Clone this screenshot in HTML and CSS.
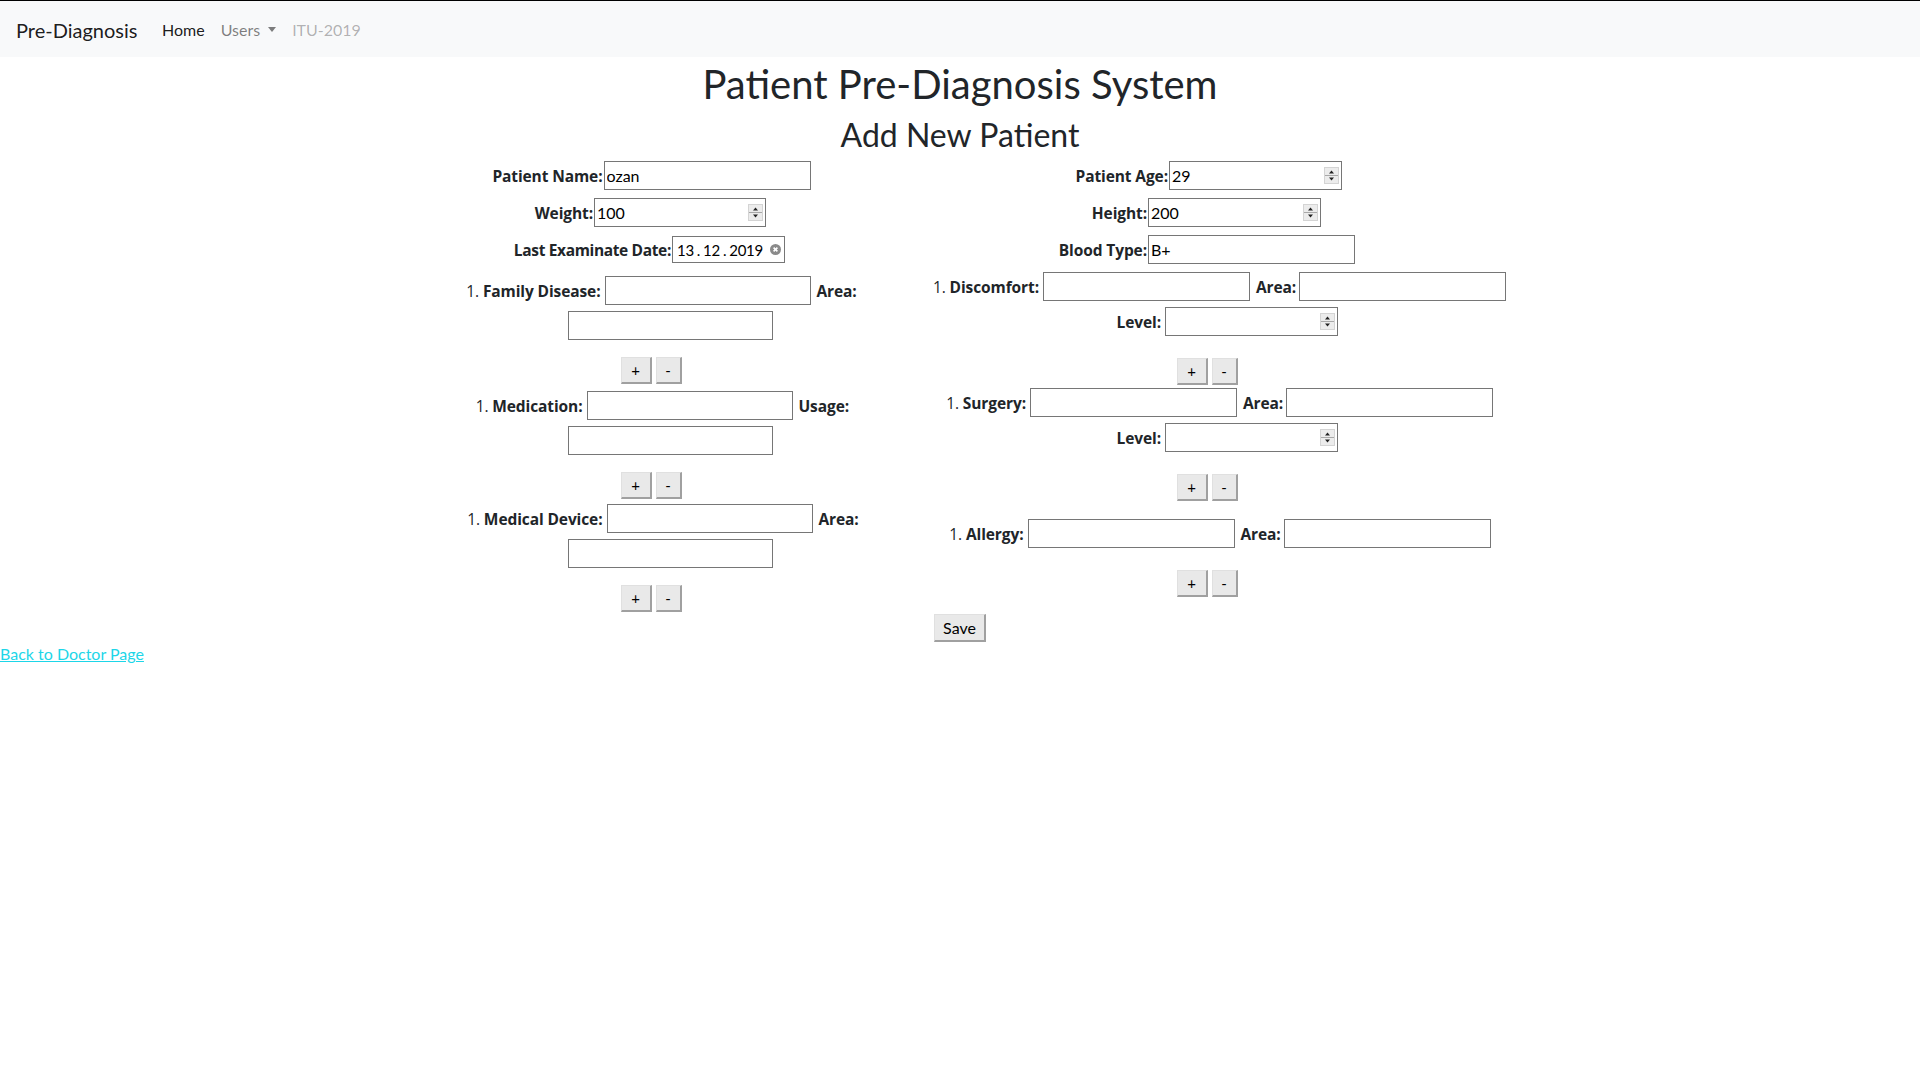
FILE: index.html
```html
<!DOCTYPE html>
<html lang="en">
<head>
<meta charset="utf-8">
<title>Pre-Diagnosis</title>
<link rel="stylesheet" href="styles.css">
</head>
<body>
<nav class="navbar">
  <a class="brand" href="#">Pre-Diagnosis</a>
  <ul class="nav">
    <li><a class="nav-link active" href="#">Home</a></li>
    <li><a class="nav-link" href="#">Users<span class="caret"></span></a></li>
    <li><a class="nav-link disabled" href="#">ITU-2019</a></li>
  </ul>
</nav>

<h1 class="title">Patient Pre-Diagnosis System</h1>
<h2 class="subtitle">Add New Patient</h2>

<form class="patient-form">
  <div class="cols">
    <div class="col">
      <div class="row r1">
        <label class="lbl l-name"><span>Patient Name:</span></label>
        <input class="txt w207" type="text" value="ozan">
      </div>
      <div class="row r2">
        <label class="lbl l-weight"><span>Weight:</span></label>
        <span class="spin-field w172">
          <input class="bare" type="text" value="100">
          <svg class="spinner" width="15" height="17" viewBox="0 0 15 17" aria-hidden="true"><rect x="0.5" y="0.5" width="14" height="16" fill="#ececec" stroke="#d4d4d4"/><line x1="1" y1="8.5" x2="14" y2="8.5" stroke="#a8a8a8"/><path d="M5 6.5h5L7.5 3.5z" fill="#222"/><path d="M5 10.5h5L7.5 13.5z" fill="#222"/></svg>
        </span>
      </div>
      <div class="row r3 short">
        <label class="lbl l-date"><span>Last Examinate Date:</span></label>
        <span class="date-field">
          <input class="bare date" type="text" value="13 . 12 . 2019">
          <svg class="clear" width="11" height="11" viewBox="0 0 11 11" aria-hidden="true"><circle cx="5.5" cy="5.5" r="5.5" fill="#8a8a8a"/><path d="M3.6 3.6l3.8 3.8M7.4 3.6l-3.8 3.8" stroke="#fff" stroke-width="1.6"/></svg>
        </span>
      </div>
      <div class="row r4">
        <label class="lbl l-family"><span><span class="num">1.</span> Family Disease:</span></label>
        <input class="txt w206" type="text">
        <span class="lbl after a44"><span>Area:</span></span>
      </div>
      <div class="row r5 offset">
        <input class="txt w205" type="text">
      </div>
      <div class="row btns r6">
        <button class="btn plus" type="button">+</button>
        <button class="btn minus" type="button">-</button>
      </div>
      <div class="row r7">
        <label class="lbl l-med"><span><span class="num">1.</span> Medication:</span></label>
        <input class="txt w206" type="text">
        <span class="lbl after a55"><span>Usage:</span></span>
      </div>
      <div class="row r8 offset">
        <input class="txt w205" type="text">
      </div>
      <div class="row btns r9">
        <button class="btn plus" type="button">+</button>
        <button class="btn minus" type="button">-</button>
      </div>
      <div class="row r10">
        <label class="lbl l-device"><span><span class="num">1.</span> Medical Device:</span></label>
        <input class="txt w206" type="text">
        <span class="lbl after a44"><span>Area:</span></span>
      </div>
      <div class="row r11 offset">
        <input class="txt w205" type="text">
      </div>
      <div class="row btns r12">
        <button class="btn plus" type="button">+</button>
        <button class="btn minus" type="button">-</button>
      </div>
    </div>

    <div class="col">
      <div class="row q1">
        <label class="lbl l-age"><span>Patient Age:</span></label>
        <span class="spin-field w173">
          <input class="bare" type="text" value="29">
          <svg class="spinner" width="15" height="17" viewBox="0 0 15 17" aria-hidden="true"><rect x="0.5" y="0.5" width="14" height="16" fill="#ececec" stroke="#d4d4d4"/><line x1="1" y1="8.5" x2="14" y2="8.5" stroke="#a8a8a8"/><path d="M5 6.5h5L7.5 3.5z" fill="#222"/><path d="M5 10.5h5L7.5 13.5z" fill="#222"/></svg>
        </span>
      </div>
      <div class="row q2">
        <label class="lbl l-height"><span>Height:</span></label>
        <span class="spin-field w173">
          <input class="bare" type="text" value="200">
          <svg class="spinner" width="15" height="17" viewBox="0 0 15 17" aria-hidden="true"><rect x="0.5" y="0.5" width="14" height="16" fill="#ececec" stroke="#d4d4d4"/><line x1="1" y1="8.5" x2="14" y2="8.5" stroke="#a8a8a8"/><path d="M5 6.5h5L7.5 3.5z" fill="#222"/><path d="M5 10.5h5L7.5 13.5z" fill="#222"/></svg>
        </span>
      </div>
      <div class="row q3">
        <label class="lbl l-blood"><span>Blood Type:</span></label>
        <input class="txt w207" type="text" value="B+">
      </div>
      <div class="row q4">
        <label class="lbl l-disc"><span><span class="num">1.</span> Discomfort:</span></label>
        <input class="txt w207" type="text">
        <span class="lbl after a49"><span>Area:</span></span>
        <input class="txt w207" type="text">
      </div>
      <div class="row q5">
        <label class="lbl l-level"><span>Level:</span></label>
        <span class="spin-field w173">
          <input class="bare" type="text">
          <svg class="spinner" width="15" height="17" viewBox="0 0 15 17" aria-hidden="true"><rect x="0.5" y="0.5" width="14" height="16" fill="#ececec" stroke="#d4d4d4"/><line x1="1" y1="8.5" x2="14" y2="8.5" stroke="#a8a8a8"/><path d="M5 6.5h5L7.5 3.5z" fill="#222"/><path d="M5 10.5h5L7.5 13.5z" fill="#222"/></svg>
        </span>
      </div>
      <div class="row btns q6">
        <button class="btn plus" type="button">+</button>
        <button class="btn minus" type="button">-</button>
      </div>
      <div class="row q7">
        <label class="lbl l-surg"><span><span class="num">1.</span> Surgery:</span></label>
        <input class="txt w207" type="text">
        <span class="lbl after a49"><span>Area:</span></span>
        <input class="txt w207" type="text">
      </div>
      <div class="row q8">
        <label class="lbl l-level"><span>Level:</span></label>
        <span class="spin-field w173">
          <input class="bare" type="text">
          <svg class="spinner" width="15" height="17" viewBox="0 0 15 17" aria-hidden="true"><rect x="0.5" y="0.5" width="14" height="16" fill="#ececec" stroke="#d4d4d4"/><line x1="1" y1="8.5" x2="14" y2="8.5" stroke="#a8a8a8"/><path d="M5 6.5h5L7.5 3.5z" fill="#222"/><path d="M5 10.5h5L7.5 13.5z" fill="#222"/></svg>
        </span>
      </div>
      <div class="row btns q9">
        <button class="btn plus" type="button">+</button>
        <button class="btn minus" type="button">-</button>
      </div>
      <div class="row q10">
        <label class="lbl l-allergy"><span><span class="num">1.</span> Allergy:</span></label>
        <input class="txt w207" type="text">
        <span class="lbl after a49"><span>Area:</span></span>
        <input class="txt w207" type="text">
      </div>
      <div class="row btns q11">
        <button class="btn plus" type="button">+</button>
        <button class="btn minus" type="button">-</button>
      </div>
    </div>
  </div>

  <div class="save-row">
    <button class="btn save" type="button">Save</button>
  </div>
</form>

<div class="back-row"><a class="back" href="#">Back to Doctor Page</a></div>
</body>
</html>
```
FILE: styles.css
```css
* { box-sizing: border-box; }

body {
  margin: 0;
  font-family: Lato, "Open Sans", sans-serif;
  font-size: 16px;
  line-height: 24px;
  color: #212529;
  background: #fff;
}

/* ---------- navbar ---------- */
.navbar {
  display: flex;
  align-items: center;
  height: 57px;
  padding: 1px 16px 0;
  border-top: 1px solid #000;
  background: #f8f9fa;
}
.brand {
  min-width: 122px;
  margin-right: 16px;
  font-size: 20px;
  line-height: 30px;
  color: rgba(0, 0, 0, .9);
  text-decoration: none;
}
.nav {
  display: flex;
  margin: 0;
  padding: 0;
  list-style: none;
}
.nav-link {
  display: block;
  padding: 8px;
  color: rgba(0, 0, 0, .5);
  text-decoration: none;
}
.nav-link.active { color: rgba(0, 0, 0, .9); }
.nav-link.disabled { color: rgba(0, 0, 0, .3); }
.caret {
  display: inline-block;
  margin-left: 8px;
  vertical-align: 4px;
  border-top: 5px solid;
  border-left: 4.5px solid transparent;
  border-right: 4.5px solid transparent;
}

/* ---------- headings ---------- */
.title {
  margin: 0 0 8px;
  padding-top: 3px;
  font-size: 40px;
  line-height: 48px;
  font-weight: 400;
  text-align: center;
}
.subtitle {
  margin: 0 0 5px;
  font-size: 32px;
  line-height: 38px;
  font-weight: 400;
  text-align: center;
}

/* ---------- form ---------- */
.patient-form { margin: 0; }
.cols {
  display: grid;
  grid-template-columns: 494px 618px;
  justify-content: center;
  align-items: start;
}
.col {
  display: flex;
  flex-direction: column;
}
.row {
  display: flex;
  justify-content: center;
  align-items: center;
  height: 29px;
}
.row.btns { height: 27px; gap: 4px; }
.row.short { height: 27px; }
.row.offset { padding-left: 38px; }

/* vertical rhythm, left column */
.r1 { margin-top: 2px; }
.r2 { margin-top: 8px; }
.r3 { margin-top: 9px; }
.r4 { margin-top: 13px; }
.r5 { margin-top: 6px; }
.r6 { margin-top: 17px; }
.r7 { margin-top: 7px; }
.r8 { margin-top: 6px; }
.r9 { margin-top: 17px; }
.r10 { margin-top: 5px; }
.r11 { margin-top: 6px; }
.r12 { margin-top: 17px; }

/* vertical rhythm, right column */
.q1 { margin-top: 2px; }
.q2 { margin-top: 8px; }
.q3 { margin-top: 8px; }
.q4 { margin-top: 8px; }
.q5 { margin-top: 6px; }
.q6 { margin-top: 22px; }
.q7 { margin-top: 3px; }
.q8 { margin-top: 6px; }
.q9 { margin-top: 22px; }
.q10 { margin-top: 18px; }
.q11 { margin-top: 22px; }

.lbl {
  flex: none;
  display: flex;
  justify-content: flex-end;
  font-family: "Open Sans", Lato, sans-serif;
  font-size: 15.5px;
  font-weight: 700;
  letter-spacing: -0.1px;
  white-space: pre;
  padding-right: 1px;
}
.lbl .num { font-weight: 400; }
.l-name { width: 112px; }
.l-weight { width: 58px; }
.l-date { width: 155px; letter-spacing: -0.35px; }
.l-family { width: 157px; padding-right: 4px; }
.l-med { width: 132px; padding-right: 4px; }
.l-device { width: 161px; padding-right: 4px; }
.l-age { width: 97px; }
.l-height { width: 55px; }
.l-blood { width: 89px; }
.l-disc { width: 135px; padding-right: 4px; }
.l-level { width: 89px; padding-right: 4px; }
.l-surg { width: 109px; padding-right: 4px; }
.l-allergy { width: 104px; padding-right: 4px; }

.lbl.after { justify-content: flex-start; padding: 0 0 0 6px; }
.a44 { width: 44px; }
.a55 { width: 55px; }
.a49 { width: 49px; padding-left: 5px; }

.txt {
  flex: none;
  height: 29px;
  margin: 0;
  padding: 0 2px;
  border: 1px solid #767676;
  border-radius: 0;
  background: #fff;
  font: inherit;
  color: #000;
  outline: none;
}
.w205 { width: 205px; }
.w206 { width: 206px; }
.w207 { width: 207px; }
.w172 { width: 172px; }
.w173 { width: 173px; }

.spin-field {
  flex: none;
  display: flex;
  align-items: center;
  height: 29px;
  border: 1px solid #767676;
  background: #fff;
}
.bare {
  flex: 1;
  min-width: 0;
  height: 100%;
  margin: 0;
  padding: 0 2px;
  border: 0;
  background: transparent;
  font: inherit;
  color: #000;
  outline: none;
}
.spinner { flex: none; margin-right: 2px; }

.date-field {
  flex: none;
  display: flex;
  align-items: center;
  width: 113px;
  height: 27px;
  border: 1px solid #767676;
  background: #fff;
}
.bare.date {
  padding-left: 4px;
  padding-right: 0;
  font-size: 15px;
  letter-spacing: -0.3px;
  word-spacing: -0.5px;
}
.clear { flex: none; margin-right: 3px; }

.btn {
  flex: none;
  height: 27px;
  margin: 0;
  padding: 0;
  border-style: solid;
  border-width: 1px 2px 2px 1px;
  border-color: #e0e0e0 #a0a0a0 #a0a0a0 #e0e0e0;
  background: #e9e9e9;
  font-family: inherit;
  font-size: 15px;
  line-height: 22px;
  color: #000;
}
.btn.plus { width: 31px; }
.btn.minus { width: 26px; }

.save-row {
  display: flex;
  justify-content: center;
  margin-top: 2px;
}
.btn.save {
  width: 52px;
  height: 28px;
  font-size: 16px;
}

.back-row { line-height: 24px; }
.back {
  color: #1dd6e8;
  text-decoration: underline;
}
```
